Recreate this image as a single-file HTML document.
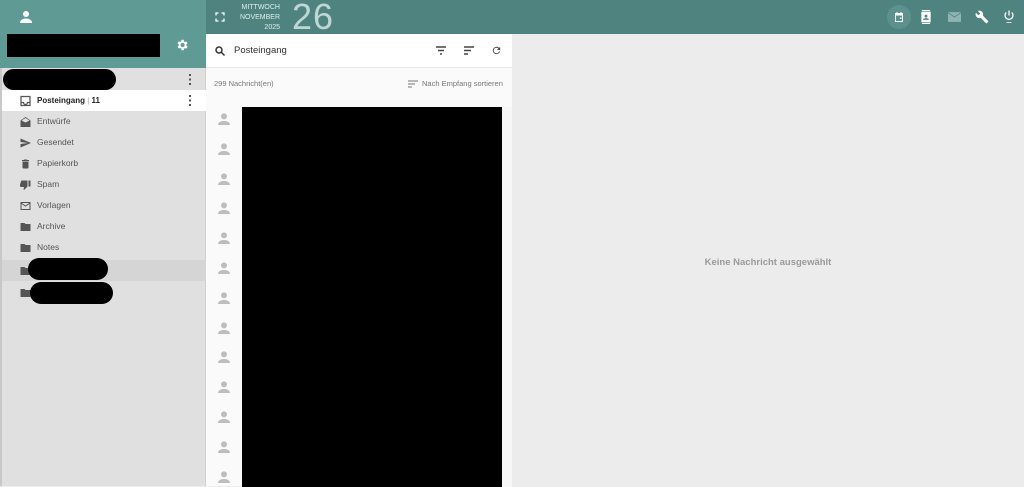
<!DOCTYPE html>
<html><head><meta charset="utf-8"><style>
*{margin:0;padding:0;box-sizing:border-box}
body{width:1024px;height:486px;overflow:hidden;font-family:"Liberation Sans",sans-serif;background:#ececec;position:relative}
.abs{position:absolute}
.side{left:0;top:0;width:206px;height:486px;background:#e0e0e0;border-left:2px solid #c8c8c8;border-right:1px solid #d0d0d0}
.shead{left:0;top:0;width:206px;height:68px;background:#5f9a95}
.top{left:206px;top:0;width:818px;height:34px;background:#4e837f}
.row{position:absolute;left:0;width:204px;height:21px;font-size:8.5px;color:#555;line-height:21px}
.row span{position:absolute;left:35px}
.row svg{position:absolute;left:17px;top:5px}
.list{left:206px;top:34px;width:306px;height:452px;background:#fafafa}
</style></head><body>
<div class="abs side"></div>
<div class="abs shead">
<svg class="abs" style="left:17px;top:8px" width="18" height="18" viewBox="0 0 24 24"><circle cx="12" cy="8" r="4" fill="#fff"/><path d="M4 20c0-4 4-6 8-6s8 2 8 6z" fill="#fff"/></svg>
<div class="abs" style="left:7px;top:34px;width:153px;height:23px;background:#000"></div>
<svg class="abs" style="left:175px;top:38px" width="14" height="14" viewBox="0 0 24 24"><path fill="#fff" d="M19.4 13a7.5 7.5 0 000-2l2.1-1.6-2-3.5-2.5 1a7 7 0 00-1.7-1L15 3h-4l-.4 2.7a7 7 0 00-1.7 1l-2.5-1-2 3.5L6.6 11a7.5 7.5 0 000 2l-2.1 1.6 2 3.5 2.5-1a7 7 0 001.7 1L11 21h4l.4-2.7a7 7 0 001.7-1l2.5 1 2-3.5zM13 15.5a3.5 3.5 0 110-7 3.5 3.5 0 010 7z"/></svg>
</div>
<div class="abs" style="left:3px;top:69px;width:113px;height:21px;background:#000;border-radius:11px"></div>
<div class="abs" style="left:189px;top:74px;width:2px;height:11px;background:repeating-linear-gradient(#555 0 2px,transparent 2px 4.5px)"></div>
<div class="row" style="top:90px;background:#fff;color:#222;left:2px"><svg width="13" height="12" viewBox="0 0 24 24"><path fill="none" stroke="#555" stroke-width="2.5" d="M3 3h18v18H3zM3 15h5a4 4 0 008 0h5"/></svg><span style="font-weight:bold;font-size:8px">Posteingang <span style="position:static;color:#aaa;font-weight:normal">|</span> 11</span><div class="abs" style="left:187px;top:5px;width:2px;height:11px;background:repeating-linear-gradient(#555 0 2px,transparent 2px 4.5px)"></div></div>
<div class="row" style="top:111px;left:2px"><svg width="13" height="12" viewBox="0 0 24 24"><path fill="#555" d="M12 2L2 9v13h20V9zM12 13L4 9l8-5 8 5z"/></svg><span>Entwürfe</span></div>
<div class="row" style="top:132px;left:2px"><svg width="13" height="12" viewBox="0 0 24 24"><path fill="#555" d="M2 21l21-9L2 3v7l15 2-15 2z"/></svg><span>Gesendet</span></div>
<div class="row" style="top:153px;left:2px"><svg width="13" height="12" viewBox="0 0 24 24"><path fill="#555" d="M6 19a2 2 0 002 2h8a2 2 0 002-2V7H6zM19 4h-3.5l-1-1h-5l-1 1H5v2h14z"/></svg><span>Papierkorb</span></div>
<div class="row" style="top:174px;left:2px"><svg width="13" height="12" viewBox="0 0 24 24"><path fill="#555" d="M13 3H5c-.8 0-1.5.5-1.8 1.2L1 11v3c0 1 1 2 2 2h6l-1 5 1 1 7-7V3zm5 0v12h4V3z"/></svg><span>Spam</span></div>
<div class="row" style="top:195px;left:2px"><svg width="13" height="12" viewBox="0 0 24 24"><path fill="none" stroke="#555" stroke-width="2" d="M3 5h18v14H3zM3 6l9 6 9-6"/></svg><span>Vorlagen</span></div>
<div class="row" style="top:216px;left:2px"><svg width="13" height="12" viewBox="0 0 24 24"><path fill="#555" d="M10 4H2v16h20V6H12z"/></svg><span>Archive</span></div>
<div class="row" style="top:237px;left:2px"><svg width="13" height="12" viewBox="0 0 24 24"><path fill="#555" d="M10 4H2v16h20V6H12z"/></svg><span>Notes</span></div>
<div class="row" style="top:260px;left:2px;background:#d5d5d5"><svg width="13" height="12" viewBox="0 0 24 24"><path fill="#555" d="M10 4H2v16h20V6H12z"/></svg></div>
<div class="row" style="top:282px;left:2px"><svg width="13" height="12" viewBox="0 0 24 24"><path fill="#555" d="M10 4H2v16h20V6H12z"/></svg></div>
<div class="abs" style="left:28px;top:258px;width:80px;height:22px;background:#000;border-radius:11px"></div>
<div class="abs" style="left:30px;top:282px;width:83px;height:22px;background:#000;border-radius:11px"></div>

<div class="abs top">
<svg class="abs" style="left:9px;top:12px" width="10" height="10" viewBox="0 0 10 10"><path fill="none" stroke="#fff" stroke-width="1.3" d="M1 3.5V1h2.5M6.5 1H9v2.5M9 6.5V9H6.5M3.5 9H1V6.5"/></svg>
<div class="abs" style="left:30px;top:3px;width:44px;text-align:right;color:#dfeeed;font-size:7px;line-height:10px">MITTWOCH<br>NOVEMBER<br>2025</div>
<div class="abs" style="left:86px;top:-4px;color:rgba(230,242,241,0.75);font-size:36px;letter-spacing:1px">26</div>
<div class="abs" style="left:681px;top:5px;width:24px;height:24px;border-radius:12px;background:#5d918d"></div>
<svg class="abs" style="left:687px;top:11px" width="12" height="12" viewBox="0 0 24 24"><path fill="#fff" d="M4 4h16v18H4zM6 9v11h12V9zM7 2h2v3H7zm8 0h2v3h-2zm-1 11h3v3h-3z"/></svg>
<svg class="abs" style="left:714px;top:10px" width="12" height="14" viewBox="0 0 20 24"><path fill="#fff" d="M2 3h16v18H2zm8 5a2.5 2.5 0 100 5 2.5 2.5 0 000-5zm-5 9h10c0-2-2.5-3-5-3s-5 1-5 3zM3 0h14v2H3zm0 22h14v2H3z"/></svg>
<svg class="abs" style="left:742px;top:12px" width="13" height="10" viewBox="0 0 24 18"><path fill="#8fb4b1" d="M0 0h24v18H0z"/><path fill="none" stroke="#4e837f" stroke-width="1.5" d="M0 1l12 8 12-8"/></svg>
<svg class="abs" style="left:769px;top:10px" width="14" height="14" viewBox="0 0 24 24"><path fill="#fff" d="M22.7 19l-9.1-9.1c.9-2.3.4-5-1.5-6.9-2-2-5-2.4-7.4-1.3L9 6 6 9 1.6 4.7C.4 7.100.9 10.1 2.9 12.1c1.9 1.9 4.6 2.4 6.9 1.5l9.1 9.1c.4.4 1 .4 1.4 0l2.3-2.3c.5-.4.5-1.1.1-1.4z"/></svg>
<svg class="abs" style="left:797px;top:9px" width="12" height="15" viewBox="0 0 24 28"><path fill="none" stroke="#fff" stroke-width="2.5" d="M12 2v10M6.5 6a8 8 0 1011 0"/><path stroke="#fff" stroke-width="1.5" d="M7 26h10"/></svg>
</div>

<div class="abs list">
<div class="abs" style="left:0;top:0;width:306px;height:34px;background:#fff;border-bottom:1px solid #e6e6e6"></div>
<svg class="abs" style="left:8px;top:11px" width="12" height="12" viewBox="0 0 24 24"><circle cx="10" cy="10" r="6" fill="none" stroke="#333" stroke-width="3"/><path d="M14.5 14.5L21 21" stroke="#333" stroke-width="3"/></svg>
<div class="abs" style="left:28px;top:11px;font-size:9.5px;color:#333">Posteingang</div>
<svg class="abs" style="left:230px;top:12px" width="10" height="9" viewBox="0 0 10 9"><path d="M0 1h10M2 4.5h6M4 8h2" stroke="#444" stroke-width="1.4"/></svg>
<svg class="abs" style="left:258px;top:12px" width="10" height="9" viewBox="0 0 10 9"><path d="M0 1h10M0 4.5h7M0 8h4" stroke="#444" stroke-width="1.4"/></svg>
<svg class="abs" style="left:285px;top:11px" width="11" height="11" viewBox="0 0 24 24"><path fill="#444" d="M17.7 6.3A8 8 0 1019.7 14h-2.1A6 6 0 1112 6c1.7 0 3.1.7 4.2 1.8L13 11h7V4z"/></svg>
<div class="abs" style="left:8px;top:45px;font-size:7.5px;color:#777">299 Nachricht(en)</div>
<svg class="abs" style="left:202px;top:46px" width="10" height="8" viewBox="0 0 10 8"><path d="M0 1h10M0 4h7M0 7h4" stroke="#777" stroke-width="1.1"/></svg>
<div class="abs" style="left:216px;top:45px;font-size:7.5px;color:#777">Nach Empfang sortieren</div>
<div class="abs" style="left:36px;top:73px;width:260px;height:380px;background:#000"></div>
<div class="abs" style="left:296px;top:73px;width:10px;height:380px;background:#f7f7f7"></div>
</div>
<div id="avs"></div>
<script>
var h='';for(var i=0;i<13;i++){var y=111+i*29.8;h+='<svg class="abs" style="left:216px;top:'+y+'px" width="16" height="16" viewBox="0 0 24 24"><circle cx="12" cy="8" r="4.5" fill="#bdbdbd"/><path d="M3 21c0-4 4.5-6 9-6s9 2 9 6z" fill="#bdbdbd"/></svg>';}
document.getElementById('avs').innerHTML=h;
</script>
<div class="abs" style="left:512px;top:34px;width:512px;height:452px;background:#ececec"></div>
<div class="abs" style="left:512px;top:257px;width:512px;text-align:center;font-size:9.5px;font-weight:bold;color:#9a9a9a">Keine Nachricht ausgewählt</div>
</body></html>
